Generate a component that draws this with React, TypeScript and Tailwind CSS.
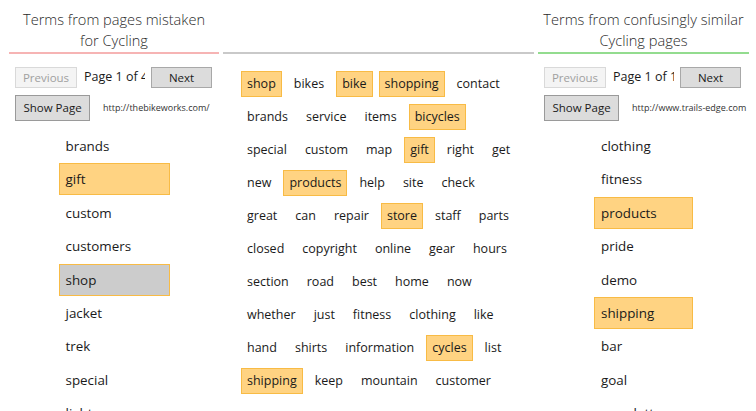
import React from "react";

type Chip = { t: string; h?: boolean };

const midRows: Chip[][] = [
  [{ t: "shop", h: true }, { t: "bikes" }, { t: "bike", h: true }, { t: "shopping", h: true }, { t: "contact" }],
  [{ t: "brands" }, { t: "service" }, { t: "items" }, { t: "bicycles", h: true }],
  [{ t: "special" }, { t: "custom" }, { t: "map" }, { t: "gift", h: true }, { t: "right" }, { t: "get" }],
  [{ t: "new" }, { t: "products", h: true }, { t: "help" }, { t: "site" }, { t: "check" }],
  [{ t: "great" }, { t: "can" }, { t: "repair" }, { t: "store", h: true }, { t: "staff" }, { t: "parts" }],
  [{ t: "closed" }, { t: "copyright" }, { t: "online" }, { t: "gear" }, { t: "hours" }],
  [{ t: "section" }, { t: "road" }, { t: "best" }, { t: "home" }, { t: "now" }],
  [{ t: "whether" }, { t: "just" }, { t: "fitness" }, { t: "clothing" }, { t: "like" }],
  [{ t: "hand" }, { t: "shirts" }, { t: "information" }, { t: "cycles", h: true }, { t: "list" }],
  [{ t: "shipping", h: true }, { t: "keep" }, { t: "mountain" }, { t: "customer" }],
];

type Item = { t: string; k?: "o" | "g" };

const leftList: Item[] = [
  { t: "brands" },
  { t: "gift", k: "o" },
  { t: "custom" },
  { t: "customers" },
  { t: "shop", k: "g" },
  { t: "jacket" },
  { t: "trek" },
  { t: "special" },
  { t: "light" },
];

const rightList: Item[] = [
  { t: "clothing" },
  { t: "fitness" },
  { t: "products", k: "o" },
  { t: "pride" },
  { t: "demo" },
  { t: "shipping", k: "o" },
  { t: "bar" },
  { t: "goal" },
  { t: "newsletter" },
];

function Controls({ pages, url }: { pages: string; url: string }) {
  return (
    <div className="shrink-0 pt-[13px] pl-[6px]">
      <div className="flex items-center">
        <div className="shrink-0 w-[62px] h-[21px] border border-[#d9d9d9] bg-[#f4f4f4] text-[#a0a0a0] text-[11.5px] flex items-center justify-center">
          Previous
        </div>
        <div className="shrink-0 ml-[7px] w-[61px] overflow-hidden whitespace-nowrap text-[12.5px] text-[#1a1a1a]">
          {pages}
        </div>
        <div className="shrink-0 ml-[6px] w-[61px] h-[21px] border border-[#a8a8a8] bg-[#dcdcdc] text-[#1a1a1a] text-[11.5px] flex items-center justify-center">
          Next
        </div>
      </div>
      <div className="mt-[7px] flex items-center">
        <div className="shrink-0 w-[75px] h-[26px] border border-[#9a9a9a] bg-[#dcdcdc] text-[#1a1a1a] text-[11.5px] flex items-center justify-center">
          Show Page
        </div>
        <div className="ml-[13px] whitespace-nowrap text-[9px] text-[#333]">{url}</div>
      </div>
    </div>
  );
}

function List({ items, width }: { items: Item[]; width: string }) {
  return (
    <div className={`shrink-0 mx-auto mt-[9px] flex flex-col gap-[1.4px] ${width}`}>
      {items.map((it, i) => (
        <div
          key={i}
          className={`h-[32px] shrink-0 flex items-center px-[6px] text-[13.4px] text-[#1a1a1a] border ${
            it.k === "o"
              ? "bg-[#ffd382] border-[#f8bb45]"
              : it.k === "g"
              ? "bg-[#cccccc] border-[#f8bb45]"
              : "border-transparent"
          }`}
        >
          {it.t}
        </div>
      ))}
    </div>
  );
}

export default function App() {
  return (
    <div className="w-[756px] h-[411px] overflow-hidden bg-white flex pl-[9px] gap-[4px] font-['Open_Sans',sans-serif]">
      <div className="w-[210px] shrink-0 flex flex-col">
        <div className="h-[52px] shrink-0 pt-[9px] text-center whitespace-nowrap text-[14.6px] leading-[21px] text-[#2a2a2a] font-light">
          Terms from pages mistaken
          <br />
          for Cycling
        </div>
        <div className="h-[2px] shrink-0 bg-[#f6b4b4]" />
        <Controls pages="Page 1 of 43" url="http://thebikeworks.com/" />
        <List items={leftList} width="w-[111px]" />
      </div>
      <div className="w-[311px] shrink-0 flex flex-col">
        <div className="h-[52px] shrink-0" />
        <div className="h-[2px] shrink-0 bg-[#c9c9c9]" />
        <div className="shrink-0 pt-[17px] pl-[18px] flex flex-col gap-[7px]">
          {midRows.map((row, i) => (
            <div key={i} className="flex gap-[6px]">
              {row.map((c, j) => (
                <div
                  key={j}
                  className={`h-[26px] flex items-center px-[5px] border text-[12.5px] text-[#1a1a1a] ${
                    c.h ? "bg-[#ffd382] border-[#f8bb45]" : "border-transparent"
                  }`}
                >
                  {c.t}
                </div>
              ))}
            </div>
          ))}
        </div>
      </div>
      <div className="w-[211px] shrink-0 flex flex-col">
        <div className="h-[52px] shrink-0 pt-[9px] text-center whitespace-nowrap text-[14.6px] leading-[21px] text-[#2a2a2a] font-light">
          Terms from confusingly similar
          <br />
          Cycling pages
        </div>
        <div className="h-[2px] shrink-0 bg-[#93dc8f]" />
        <Controls pages="Page 1 of 13" url="http://www.trails-edge.com" />
        <List items={rightList} width="w-[99px]" />
      </div>
    </div>
  );
}
